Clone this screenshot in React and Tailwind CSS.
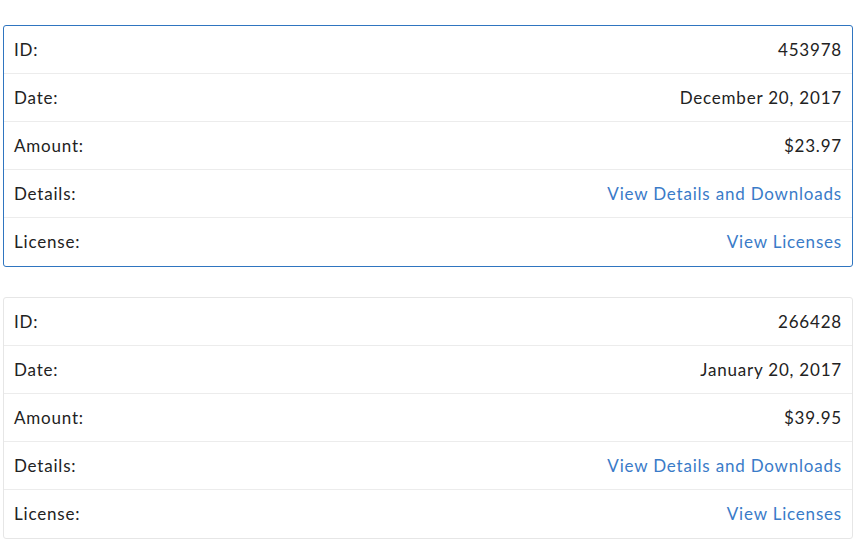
export default function App() {
  const cards = [
    { id: "453978", date: "December 20, 2017", amount: "$23.97", active: true },
    { id: "266428", date: "January 20, 2017", amount: "$39.95", active: false },
  ];
  return (
    <div className="bg-white min-h-[541px] pt-[25px] pl-[3px] pr-[7px] flex flex-col gap-[30px] text-[17px] tracking-[0.8px] text-[#222]" style={{ fontFamily: "Lato, sans-serif" }}>
      {cards.map((c) => (
        <div key={c.id} className={`rounded-[3px] border ${c.active ? "border-[#2f75c0]" : "border-[#e6e6e6]"}`}>
          {[
            ["ID:", c.id, false],
            ["Date:", c.date, false],
            ["Amount:", c.amount, false],
            ["Details:", "View Details and Downloads", true],
            ["License:", "View Licenses", true],
          ].map(([l, v, link], i) => (
            <div key={l} className={`h-[48px] flex items-center justify-between px-[10px] ${i < 4 ? "border-b border-[#ececec]" : ""}`}>
              <span>{l}</span>
              <span className={link ? "text-[#3a7bc8]" : ""}>{v}</span>
            </div>
          ))}
        </div>
      ))}
    </div>
  );
}
